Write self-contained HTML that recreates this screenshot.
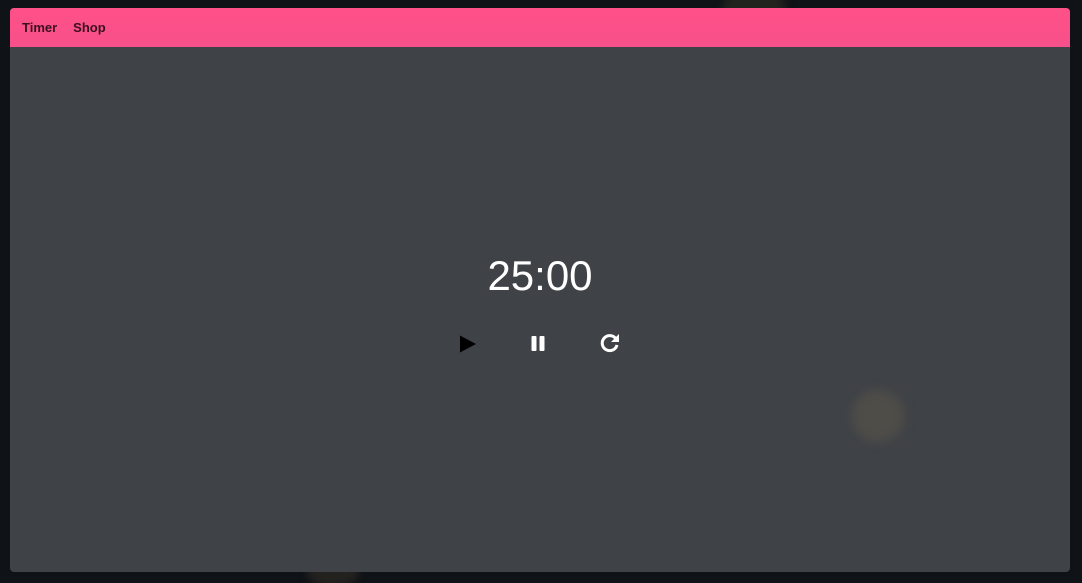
<!DOCTYPE html>
<html><head><style>
html,body{margin:0;padding:0;width:1082px;height:583px;background:#0f1216;overflow:hidden;font-family:"Liberation Sans",sans-serif}
.wrap{position:absolute;left:0;top:0;width:1082px;height:583px;overflow:hidden}
.blob{position:absolute;border-radius:50%;filter:blur(4px)}
.panel{position:absolute;left:10px;top:8px;width:1060px;height:564px;background:#3f4247;border-radius:4px;overflow:hidden}
.hdr{height:39px;background:linear-gradient(#ff5089,#f8508a);display:flex;align-items:center}
.hdr span{font-weight:bold;font-size:13px;color:#3a1020;margin-left:12px;margin-right:4px}
.time{position:absolute;left:0;width:1060px;top:243px;text-align:center;color:#fff;font-size:42px;line-height:50px}
svg{position:absolute}
</style></head><body>
<div class="wrap">
<div class="blob" style="left:722px;top:-20px;width:64px;height:64px;background:#22221f"></div>
<div class="blob" style="left:307px;top:557px;width:52px;height:30px;background:#24221f"></div>
<div class="panel">
<div class="hdr"><span>Timer</span><span>Shop</span></div>
<div class="blob" style="left:842px;top:382px;width:52px;height:52px;background:#4f4d48;filter:blur(5px)"></div>
<div class="time">25:00</div>
<svg style="left:449px;top:327px" width="18" height="18" viewBox="0 0 18 18"><path d="M1 0.5 L17 9 L1 17.5 Z" fill="#000"/></svg>
<svg style="left:521px;top:328px" width="14" height="15" viewBox="0 0 14 15"><rect x="0.5" y="0" width="5" height="15" rx="1" fill="#fff"/><rect x="8.5" y="0" width="5" height="15" rx="1" fill="#fff"/></svg>
<svg style="left:589px;top:324px" width="22" height="22" viewBox="0 0 22 22"><path d="M17 7 A7.5 7.5 0 1 0 18 13" fill="none" stroke="#fff" stroke-width="3"/><path d="M20 2 L20 10 L12 10 Z" fill="#fff"/></svg>
</div>
</div>
</body></html>
